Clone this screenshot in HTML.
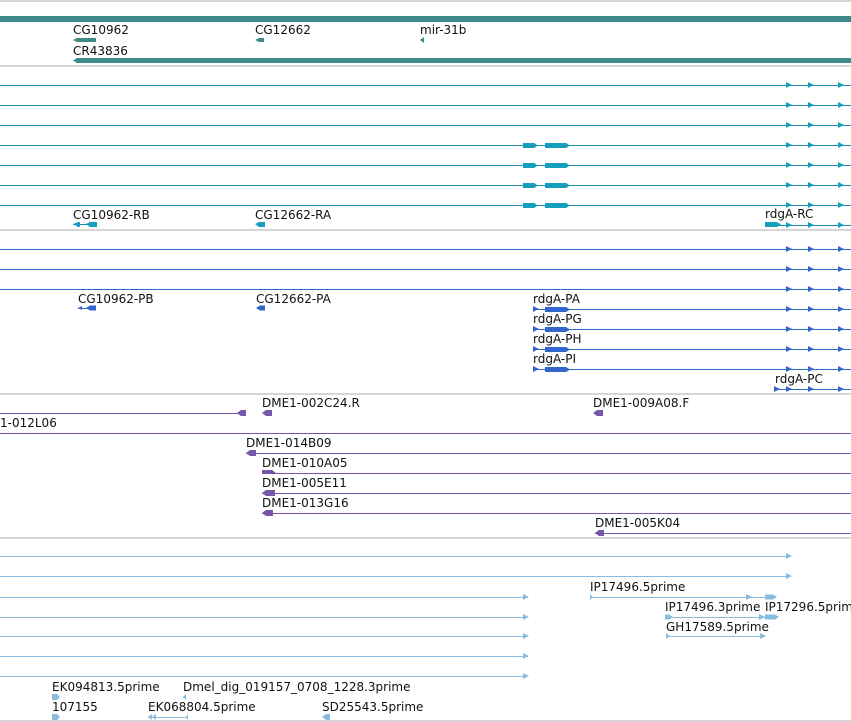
<!DOCTYPE html>
<html><head><meta charset="utf-8"><style>
html,body{margin:0;padding:0;background:#fff;width:851px;height:722px;overflow:hidden}
svg{display:block}
text{font-family:"DejaVu Sans","Liberation Sans",sans-serif;font-size:12px;fill:#111}
.c{font-family:"DejaVu Sans Condensed","DejaVu Sans",sans-serif}
.l{shape-rendering:crispEdges}
</style></head><body>
<svg width="851" height="722" viewBox="0 0 851 722" xmlns="http://www.w3.org/2000/svg">
<defs>
<path id="at" d="M0,-3 L6,0 L0,3 Z"/>
</defs>
<g stroke="#c8c8c8" stroke-width="1.5">
<line x1="0" y1="1" x2="851" y2="1"/><line x1="0" y1="66" x2="851" y2="66"/>
<line x1="0" y1="230" x2="851" y2="230"/><line x1="0" y1="394" x2="851" y2="394"/>
<line x1="0" y1="538" x2="851" y2="538"/><line x1="0" y1="721" x2="851" y2="721"/>
</g>
<rect x="0" y="16" width="851" height="6" fill="#3d8b8b"/>
<text x="73" y="34">CG10962</text><text x="255" y="34">CG12662</text><text x="420" y="34">mir-31b</text>
<path d="M73,40 L77,38 L96,38 L96,42 L77,42 Z" fill="#3d8b8b"/>
<path d="M255,40 L259,38 L264,38 L264,42 L259,42 Z" fill="#3d8b8b"/>
<path d="M420,40 L424,37 L424,43 Z" fill="#3d8b8b"/>
<text x="73" y="55">CR43836</text>
<path d="M73,60.5 L77,58 L851,58 L851,63 L77,63 Z" fill="#3d8b8b"/>
<g stroke="#1b8ca8" stroke-width="1" class="l">
<line x1="0" y1="85.5" x2="851" y2="85.5"/><line x1="0" y1="105.5" x2="851" y2="105.5"/>
<line x1="0" y1="125.5" x2="851" y2="125.5"/><line x1="0" y1="145.5" x2="851" y2="145.5"/>
<line x1="0" y1="165.5" x2="851" y2="165.5"/><line x1="0" y1="185.5" x2="851" y2="185.5"/>
<line x1="0" y1="205.5" x2="851" y2="205.5"/><line x1="765" y1="225.5" x2="851" y2="225.5"/>
<line x1="73" y1="224.5" x2="96" y2="224.5"/>
</g>
<g fill="#12a0bd">
<use href="#at" x="786" y="85"/><use href="#at" x="808" y="85"/><use href="#at" x="838" y="85"/>
<use href="#at" x="786" y="105"/><use href="#at" x="808" y="105"/><use href="#at" x="838" y="105"/>
<use href="#at" x="786" y="125"/><use href="#at" x="808" y="125"/><use href="#at" x="838" y="125"/>
<use href="#at" x="786" y="145"/><use href="#at" x="808" y="145"/><use href="#at" x="838" y="145"/>
<use href="#at" x="786" y="165"/><use href="#at" x="808" y="165"/><use href="#at" x="838" y="165"/>
<use href="#at" x="786" y="185"/><use href="#at" x="808" y="185"/><use href="#at" x="838" y="185"/>
<use href="#at" x="786" y="205"/><use href="#at" x="808" y="205"/><use href="#at" x="838" y="205"/>
<use href="#at" x="786" y="225"/><use href="#at" x="808" y="225"/><use href="#at" x="838" y="225"/>
<path d="M523,143 L534,143 L538,145.5 L534,148 L523,148 Z M545,143 L566,143 L570,145.5 L566,148 L545,148 Z"/>
<path d="M523,163 L534,163 L538,165.5 L534,168 L523,168 Z M545,163 L566,163 L570,165.5 L566,168 L545,168 Z"/>
<path d="M523,183 L534,183 L538,185.5 L534,188 L523,188 Z M545,183 L566,183 L570,185.5 L566,188 L545,188 Z"/>
<path d="M523,203 L534,203 L538,205.5 L534,208 L523,208 Z M545,203 L566,203 L570,205.5 L566,208 L545,208 Z"/>
<path d="M765,222 L777,222 L781,224.5 L777,227 L765,227 Z"/>
<path d="M73,224 L78,222 L80,222 L80,227 L78,227 Z M86,224 L90,222 L97,222 L97,227 L90,227 Z"/>
<path d="M255,224 L259,222 L265,222 L265,227 L259,227 Z"/>
</g>
<text x="73" y="219">CG10962-RB</text><text x="255" y="219">CG12662-RA</text><text x="765" y="218">rdgA-RC</text>
<g stroke="#3366cc" stroke-width="1" class="l">
<line x1="0" y1="249.5" x2="851" y2="249.5"/><line x1="0" y1="269.5" x2="851" y2="269.5"/>
<line x1="0" y1="289.5" x2="851" y2="289.5"/>
<line x1="533" y1="309.5" x2="851" y2="309.5"/><line x1="533" y1="329.5" x2="851" y2="329.5"/>
<line x1="533" y1="349.5" x2="851" y2="349.5"/><line x1="533" y1="369.5" x2="851" y2="369.5"/>
<line x1="775" y1="389.5" x2="851" y2="389.5"/><line x1="78" y1="308.5" x2="96" y2="308.5"/>
</g>
<g fill="#3366cc">
<use href="#at" x="786" y="249"/><use href="#at" x="808" y="249"/><use href="#at" x="838" y="249"/>
<use href="#at" x="786" y="269"/><use href="#at" x="808" y="269"/><use href="#at" x="838" y="269"/>
<use href="#at" x="786" y="289"/><use href="#at" x="808" y="289"/><use href="#at" x="838" y="289"/>
<use href="#at" x="786" y="309"/><use href="#at" x="808" y="309"/><use href="#at" x="838" y="309"/>
<use href="#at" x="786" y="329"/><use href="#at" x="808" y="329"/><use href="#at" x="838" y="329"/>
<use href="#at" x="786" y="349"/><use href="#at" x="808" y="349"/><use href="#at" x="838" y="349"/>
<use href="#at" x="786" y="369"/><use href="#at" x="808" y="369"/><use href="#at" x="838" y="369"/>
<use href="#at" x="786" y="389"/><use href="#at" x="808" y="389"/><use href="#at" x="838" y="389"/>
<use href="#at" x="533" y="309"/><use href="#at" x="533" y="329"/><use href="#at" x="533" y="349"/><use href="#at" x="533" y="369"/>
<use href="#at" x="774" y="389"/>
<path d="M545,307 L566,307 L570,309.5 L566,312 L545,312 Z"/>
<path d="M545,327 L566,327 L570,329.5 L566,332 L545,332 Z"/>
<path d="M545,347 L566,347 L570,349.5 L566,352 L545,352 Z"/>
<path d="M545,367 L566,367 L570,369.5 L566,372 L545,372 Z"/>
<path d="M78,308 L82,306 L82,310 Z M86,308 L90,305.5 L96,305.5 L96,310.5 L90,310.5 Z"/>
<path d="M256,308 L260,305.5 L265,305.5 L265,310.5 L260,310.5 Z"/>
</g>
<text x="78" y="303">CG10962-PB</text><text x="256" y="303">CG12662-PA</text>
<text x="533" y="303">rdgA-PA</text><text x="533" y="323">rdgA-PG</text><text x="533" y="343">rdgA-PH</text><text x="533" y="363">rdgA-PI</text>
<text x="775" y="383">rdgA-PC</text>
<g stroke="#7755aa" stroke-width="1" class="l">
<line x1="0" y1="413.5" x2="245" y2="413.5"/><line x1="0" y1="433.5" x2="851" y2="433.5"/>
<line x1="246" y1="453.5" x2="851" y2="453.5"/><line x1="262" y1="473.5" x2="851" y2="473.5"/>
<line x1="262" y1="493.5" x2="851" y2="493.5"/><line x1="262" y1="513.5" x2="851" y2="513.5"/>
<line x1="595" y1="533.5" x2="851" y2="533.5"/>
</g>
<g fill="#7755aa">
<path d="M237,413 L241,410 L246,410 L246,416 L241,416 Z"/>
<path d="M262,413 L266,410 L272,410 L272,416 L266,416 Z"/>
<path d="M593,413 L597,410 L603,410 L603,416 L597,416 Z"/>
<path d="M246,453 L250,450 L256,450 L256,456 L250,456 Z"/>
<path d="M262,470 L272,470 L276,473 L262,473 Z"/>
<path d="M262,493 L266,490 L275,490 L275,496 L266,496 Z"/>
<path d="M262,513 L266,510 L273,510 L273,516 L266,516 Z"/>
<path d="M595,533 L599,530 L604,530 L604,536 L599,536 Z"/>
</g>
<text x="262" y="407">DME1-002C24.R</text><text x="593" y="407">DME1-009A08.F</text>
<text x="0" y="427">1-012L06</text><text x="246" y="447">DME1-014B09</text>
<text x="262" y="467">DME1-010A05</text><text x="262" y="487">DME1-005E11</text>
<text x="262" y="507">DME1-013G16</text><text x="595" y="527">DME1-005K04</text>
<g stroke="#88bbdd" stroke-width="1" class="l">
<line x1="0" y1="556.5" x2="790" y2="556.5"/><line x1="0" y1="576.5" x2="790" y2="576.5"/>
<line x1="0" y1="597.5" x2="528" y2="597.5"/><line x1="0" y1="617.5" x2="527" y2="617.5"/>
<line x1="0" y1="636.5" x2="528" y2="636.5"/><line x1="0" y1="656.5" x2="528" y2="656.5"/>
<line x1="0" y1="676.5" x2="527" y2="676.5"/>
<line x1="590" y1="597.5" x2="770" y2="597.5"/><line x1="665" y1="617.5" x2="775" y2="617.5"/>
<line x1="666" y1="636.5" x2="765" y2="636.5"/><line x1="148" y1="717.5" x2="188" y2="717.5"/>
</g>
<g fill="#88bbdd">
<use href="#at" x="786" y="556"/><use href="#at" x="786" y="576"/>
<use href="#at" x="523" y="597"/><use href="#at" x="523" y="617"/><use href="#at" x="523" y="636"/><use href="#at" x="523" y="656"/><use href="#at" x="523" y="676"/>
<use href="#at" x="746" y="597"/><use href="#at" x="759" y="617"/><use href="#at" x="760" y="636"/>
<path d="M765,594.5 L773,594.5 L777,597 L773,599.5 L765,599.5 Z"/>
<path d="M765,614.5 L775,614.5 L779,617 L775,619.5 L765,619.5 Z"/>
<path d="M665,614.5 L669,614.5 L673,617 L669,619.5 L665,619.5 Z"/>
<path d="M590,594 L593,597 L590,600 Z M666,633 L670,636 L666,639 Z"/>
<path d="M52,694 L57,694 L60,697 L57,700 L52,700 Z"/>
<path d="M52,714 L57,714 L60,717 L57,720 L52,720 Z"/>
<path d="M183,697 L186,694 L186,700 Z"/>
<path d="M148,717 L152,714 L152,720 Z M152,717 L156,714 L156,720 Z M188,714 L188,720 L186,717 Z"/>
<path d="M322,717 L326,714 L330,714 L330,720 L326,720 Z"/>
</g>
<g class="c">
<text x="590" y="591">IP17496.5prime</text><text x="665" y="611">IP17496.3prime</text>
<text x="765" y="611">IP17296.5prime</text><text x="666" y="631">GH17589.5prime</text>
<text x="52" y="691">EK094813.5prime</text><text x="183" y="691">Dmel_dig_019157_0708_1228.3prime</text>
<text x="52" y="711">107155</text><text x="148" y="711">EK068804.5prime</text><text x="322" y="711">SD25543.5prime</text>
</g>
</svg>
</body></html>
